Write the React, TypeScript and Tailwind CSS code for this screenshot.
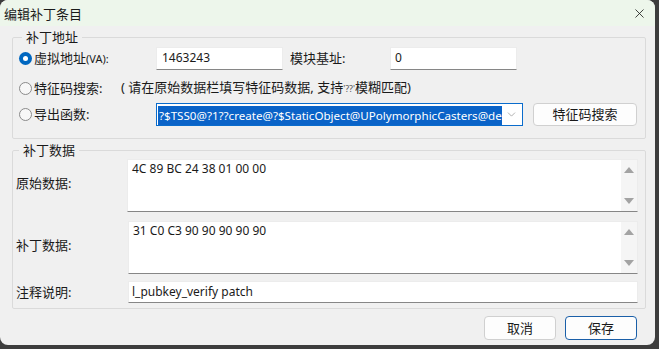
import { X, ChevronDown } from 'lucide-react'

const font = "font-['Segoe_UI','Noto_Sans','Noto_Sans_CJK_SC',sans-serif]"

function Radio({ checked }: { checked?: boolean }) {
  return checked ? (
    <span className="w-[13px] h-[13px] rounded-full bg-[#0067c0] flex items-center justify-center shrink-0">
      <span className="w-[5px] h-[5px] rounded-full bg-white" />
    </span>
  ) : (
    <span className="w-[13px] h-[13px] rounded-full border border-[#8a8a8a] bg-[#f7f7f7] shrink-0" />
  )
}

function Scroll() {
  return (
    <div className="w-[16px] h-full bg-[#f5f5f5] flex flex-col items-center justify-between py-[7px]">
      <span className="w-0 h-0 border-l-[5px] border-r-[5px] border-b-[6px] border-l-transparent border-r-transparent border-b-[#a3a3a3]" />
      <span className="w-0 h-0 border-l-[5px] border-r-[5px] border-t-[6px] border-l-transparent border-r-transparent border-t-[#a3a3a3]" />
    </div>
  )
}

function TextBox({ text }: { text: string }) {
  return (
    <div className="flex-1 h-[53px] bg-white border border-[#ececec] border-b-[#868686] flex">
      <div className="flex-1 pl-[4px] pt-[1px] text-[12px] leading-[16px] text-[#1a1a1a]">{text}</div>
      <Scroll />
    </div>
  )
}

export default function App() {
  return (
    <div className={`w-[659px] h-[349px] bg-[#3d3d3d] ${font}`}>
      <div className="w-[655px] h-[345px] rounded-lg overflow-hidden bg-[#f0f0f0] flex flex-col text-[#1a1a1a]">
        {/* title bar */}
        <div className="h-[26px] bg-[#edf6eb] flex items-center justify-between pl-[4px] pr-[8px] shrink-0">
          <span className="text-[13px] leading-[18px] pt-[1px]">编辑补丁条目</span>
          <X className="w-[15px] h-[15px]" strokeWidth={1.3} />
        </div>

        <div className="pl-[12px] pr-[9px] pt-[2px] flex flex-col">
          {/* group 1 */}
          <fieldset className="border border-[#dadada] rounded-[2px] pl-[6px] pr-[8px] pb-[12px]">
            <legend className="ml-[3px] px-[4px] text-[13px] leading-[18px]">补丁地址</legend>
            <div className="flex items-center h-[24px]">
              <Radio checked />
              <span className="ml-[2px] w-[122px] text-[13px] leading-[18px] whitespace-nowrap">
                虚拟地址<span className="text-[11px]">(VA):</span>
              </span>
              <div className="w-[127px] h-[23px] bg-white border border-[#ececec] border-b-[#868686] pl-[5px] text-[12px] leading-[20px]">1463243</div>
              <span className="ml-[7px] w-[100px] text-[13px] leading-[18px]">模块基址:</span>
              <div className="w-[127px] h-[23px] bg-white border border-[#ececec] border-b-[#868686] pl-[4px] text-[12px] leading-[20px]">0</div>
            </div>
            <div className="flex items-center h-[24px] mt-[6px]">
              <Radio />
              <span className="ml-[2px] w-[87px] text-[13px] leading-[18px]">特征码搜索:</span>
              <span className="text-[13px] leading-[18px] whitespace-nowrap">
                ( 请在原始数据栏填写特征码数据, 支持<span className="text-[9px] text-[#555]">'??'</span>模糊匹配)
              </span>
            </div>
            <div className="flex items-center h-[24px] mt-[2px]">
              <Radio />
              <span className="ml-[2px] w-[122px] text-[13px] leading-[18px]">导出函数:</span>
              <div className="w-[367px] h-[23px] bg-white border border-[#0a6ccc] flex items-center pl-[1px] pr-[4px]">
                <div className="flex-1 min-w-0 overflow-hidden whitespace-nowrap">
                  <span className="bg-[#0a63c8] text-white text-[11.6px] leading-[19px] inline-block px-[1px]">
                    ?$TSS0@?1??create@?$StaticObject@UPolymorphicCasters@detail@
                  </span>
                </div>
                <ChevronDown className="w-[13px] h-[13px] text-[#888] ml-[3px] shrink-0" strokeWidth={1.2} />
              </div>
              <button className="ml-[10px] w-[104px] h-[23px] bg-[#fdfdfd] border border-[#d0d0d0] rounded-[4px] text-[13px] leading-[18px]">
                特征码搜索
              </button>
            </div>
          </fieldset>

          {/* group 2 */}
          <fieldset className="mt-[2px] border border-[#dadada] rounded-[2px] pl-[3px] pr-[7px] pb-[5px]">
            <legend className="ml-[3px] px-[4px] text-[13px] leading-[18px]">补丁数据</legend>
            <div className="flex items-center">
              <span className="w-[111px] mb-[6px] text-[13px] leading-[18px]">原始数据:</span>
              <TextBox text="4C 89 BC 24 38 01 00 00" />
            </div>
            <div className="flex items-center mt-[9px]">
              <span className="w-[112px] mb-[6px] text-[13px] leading-[18px]">补丁数据:</span>
              <TextBox text="31 C0 C3 90 90 90 90 90" />
            </div>
            <div className="flex items-center mt-[7px]">
              <span className="w-[112px] text-[13px] leading-[18px]">注释说明:</span>
              <div className="flex-1 h-[22px] bg-white border border-[#ececec] border-b-[#868686] pl-[3px] text-[12px] leading-[20px]">
                l_pubkey_verify patch
              </div>
            </div>
          </fieldset>

          {/* buttons */}
          <div className="flex justify-end gap-[9px] mt-[7px] pr-[9px]">
            <button className="w-[72px] h-[24px] bg-[#fdfdfd] border border-[#d0d0d0] rounded-[4px] text-[13px] leading-[18px]">取消</button>
            <button className="w-[72px] h-[24px] bg-[#fdfdfd] border border-[#1a5fa8] rounded-[4px] text-[13px] leading-[18px]">保存</button>
          </div>
        </div>
      </div>
    </div>
  )
}
